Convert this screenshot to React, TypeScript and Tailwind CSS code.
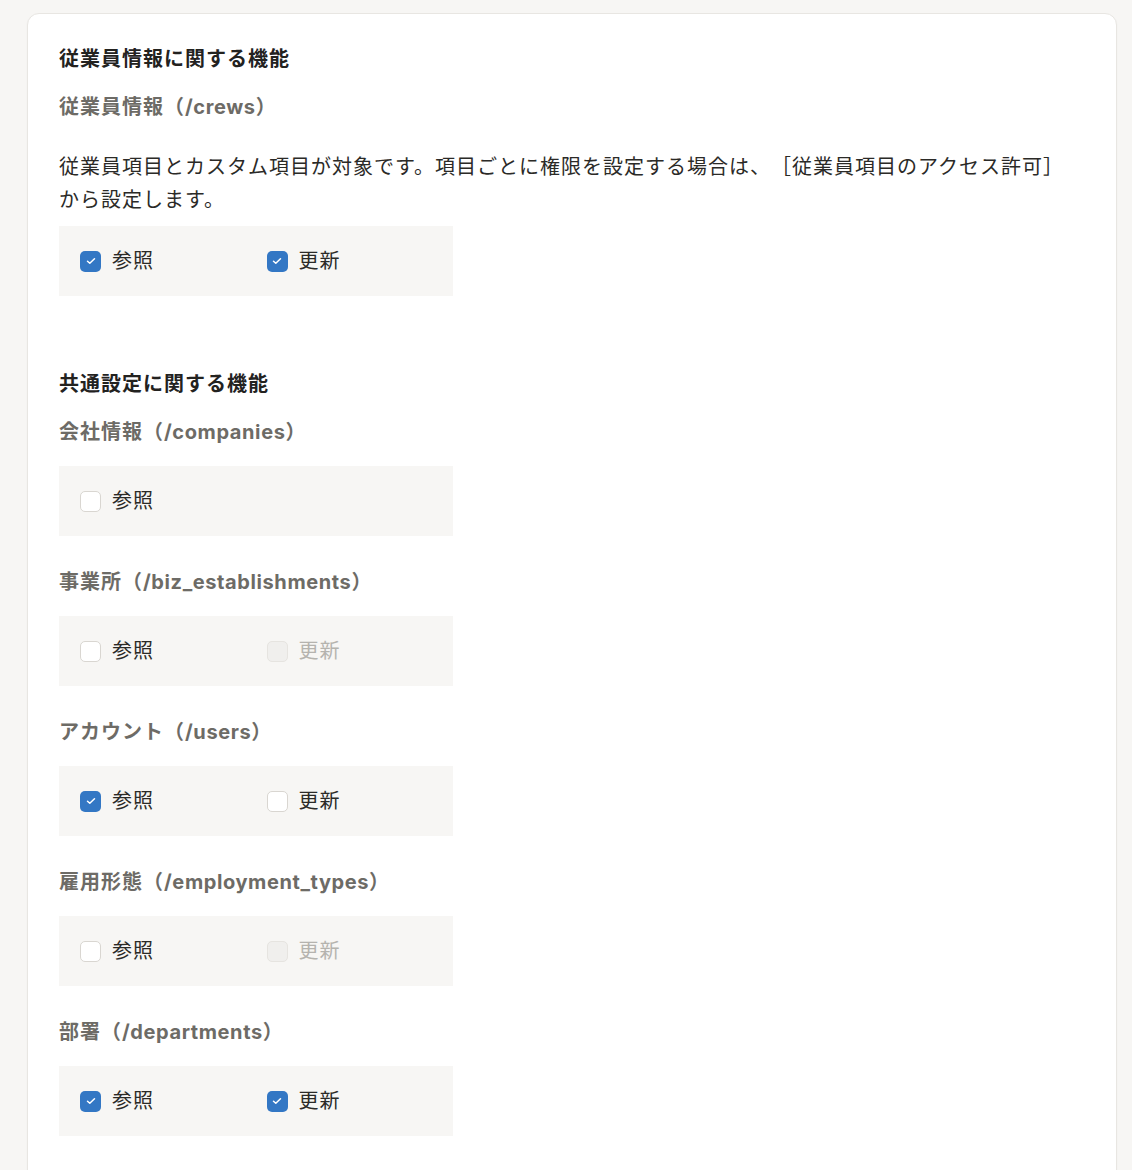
import { Fragment } from 'react';

type Perm = 'on' | 'off' | 'disabled';

type Item = {
  name: string;
  path: string;
  read: Perm;
  write?: Perm;
};

const commonItems: Item[] = [
  { name: '会社情報', path: '/companies', read: 'off' },
  { name: '事業所', path: '/biz_establishments', read: 'off', write: 'disabled' },
  { name: 'アカウント', path: '/users', read: 'on', write: 'off' },
  { name: '雇用形態', path: '/employment_types', read: 'off', write: 'disabled' },
  { name: '部署', path: '/departments', read: 'on', write: 'on' },
  { name: '役職', path: '/positions', read: 'on', write: 'on' },
];

function Checkbox({ state, label }: { state: Perm; label: string }) {
  return (
    <label className="flex w-[187px] items-center gap-[11px]">
      {state === 'on' && (
        <span className="flex h-[21px] w-[21px] items-center justify-center rounded-[5px] bg-[#3377c4]">
          <svg width="10" height="8" viewBox="0 0 10 8" fill="none">
            <path d="M1.5 4.2 3.8 6.3 8.5 1.7" stroke="white" strokeWidth="1.5" strokeLinecap="round" strokeLinejoin="round" />
          </svg>
        </span>
      )}
      {state === 'off' && (
        <span className="h-[21px] w-[21px] rounded-[5px] border border-[#d9d6d1] bg-white" />
      )}
      {state === 'disabled' && (
        <span className="h-[21px] w-[21px] rounded-[5px] border border-[#e6e4e0] bg-[#f0efed]" />
      )}
      <span className={state === 'disabled' ? 'text-[#b5b3ae]' : 'text-[#2b2a27]'}>{label}</span>
    </label>
  );
}

function PermPanel({ read, write }: { read: Perm; write?: Perm }) {
  return (
    <div className="flex h-[70px] w-[394px] items-center bg-[#f7f6f4] pl-[21px]">
      <Checkbox state={read} label="参照" />
      {write && <Checkbox state={write} label="更新" />}
    </div>
  );
}

function ItemTitle({ name, path, className }: { name: string; path: string; className: string }) {
  return (
    <h3 className={`${className} leading-[30px] font-bold text-[#6d6b66]`}>
      {name}（<span className="tracking-[0.03em]">{path}</span>）
    </h3>
  );
}

export default function App() {
  return (
    <div
      className="h-[1170px] overflow-hidden bg-[#f7f6f4] pl-[27px] pr-[15px] pt-[13px] text-[20px] tracking-[0.05em] [text-spacing-trim:space-all]"
      style={{ fontFamily: 'Inter, "Noto Sans CJK JP", sans-serif' }}
    >
      <div className="min-h-[1300px] rounded-t-[12px] border border-[#e8e6e2] bg-white px-[31px] pt-[30px] shadow-[0_1px_2px_rgba(0,0,0,0.04)]">
        {/* 従業員情報 */}
        <h2 className="leading-[30px] font-bold text-[#23221f]">従業員情報に関する機能</h2>
        <ItemTitle name="従業員情報" path="/crews" className="mt-[18px]" />
        <p className="mt-[29px] max-w-[1015px] leading-[33px] text-[#2b2a27]">
          従業員項目とカスタム項目が対象です。項目ごとに権限を設定する場合は、［従業員項目のアクセス許可］から設定します。
        </p>
        <div className="mt-[9px]">
          <PermPanel read="on" write="on" />
        </div>

        {/* 共通設定 */}
        <h2 className="mt-[73px] leading-[30px] font-bold text-[#23221f]">共通設定に関する機能</h2>
        {commonItems.map((item, i) => (
          <Fragment key={item.path}>
            <ItemTitle name={item.name} path={item.path} className={i === 0 ? 'mt-[18px]' : 'mt-[31px]'} />
            <div className="mt-[19px]">
              <PermPanel read={item.read} write={item.write} />
            </div>
          </Fragment>
        ))}
      </div>
    </div>
  );
}
